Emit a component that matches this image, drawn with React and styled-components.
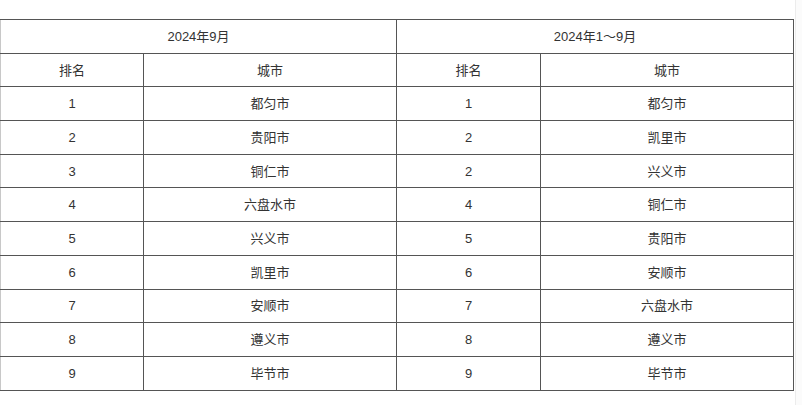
import React from "react";
import styled, { createGlobalStyle } from "styled-components";

const Global = createGlobalStyle`
  html, body { margin: 0; padding: 0; background: #fff; }
  body { font-family: "Liberation Sans", "Noto Sans CJK SC", sans-serif; }
`;

const Page = styled.div`
  display: flex;
  width: 802px;
  height: 405px;
  overflow: hidden;
`;

const Main = styled.div`
  flex: 1;
  padding-top: 19px;
`;

const Scrollbar = styled.div`
  width: 6px;
  border-left: 1px solid #ececec;
  background: #fbfbfb;
`;

const Table = styled.table`
  border-collapse: collapse;
  width: 793px;
  table-layout: fixed;
  color: #333;
  font-size: 13px;
`;

const Cell = styled.td`
  border: 1px solid #555;
  border-left-color: ${(p) => (p.$first ? "#c8c8c8" : "#555")};
  height: 32.7px;
  padding: 0;
  text-align: center;
  vertical-align: middle;
  line-height: 15px;
`;

const Row = styled.tr``;

const left = [
  ["1", "都匀市"],
  ["2", "贵阳市"],
  ["3", "铜仁市"],
  ["4", "六盘水市"],
  ["5", "兴义市"],
  ["6", "凯里市"],
  ["7", "安顺市"],
  ["8", "遵义市"],
  ["9", "毕节市"],
];
const right = [
  ["1", "都匀市"],
  ["2", "凯里市"],
  ["2", "兴义市"],
  ["4", "铜仁市"],
  ["5", "贵阳市"],
  ["6", "安顺市"],
  ["7", "六盘水市"],
  ["8", "遵义市"],
  ["9", "毕节市"],
];

export default function App() {
  return (
    <>
      <Global />
      <Page>
        <Main>
          <Table>
            <colgroup>
              <col style={{ width: 143 }} />
              <col style={{ width: 253 }} />
              <col style={{ width: 144 }} />
              <col style={{ width: 253 }} />
            </colgroup>
            <tbody>
              <Row>
                <Cell $first colSpan={2}>2024年9月</Cell>
                <Cell colSpan={2}>2024年1～9月</Cell>
              </Row>
              <Row>
                <Cell $first>排名</Cell>
                <Cell>城市</Cell>
                <Cell>排名</Cell>
                <Cell>城市</Cell>
              </Row>
              {left.map((l, i) => (
                <Row key={i}>
                  <Cell $first>{l[0]}</Cell>
                  <Cell>{l[1]}</Cell>
                  <Cell>{right[i][0]}</Cell>
                  <Cell>{right[i][1]}</Cell>
                </Row>
              ))}
            </tbody>
          </Table>
        </Main>
        <Scrollbar />
      </Page>
    </>
  );
}
